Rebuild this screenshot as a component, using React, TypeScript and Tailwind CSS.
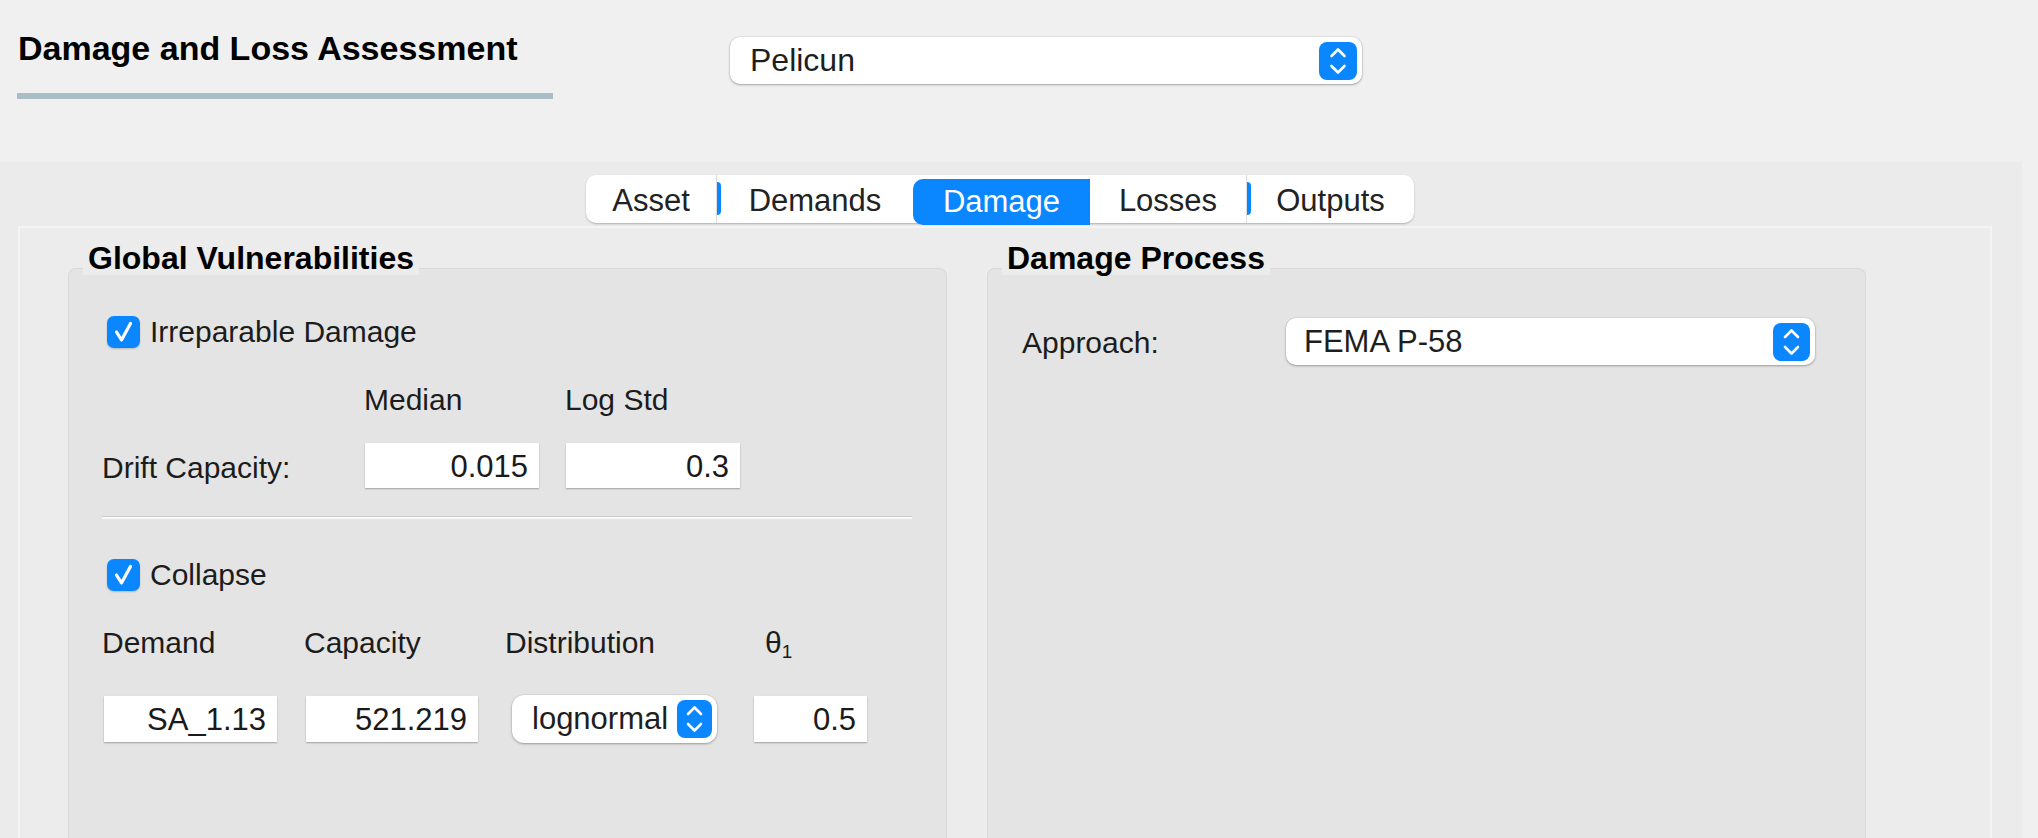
import React from "react";

const BLUE = "bg-[#0a86ff]";

function Stepper({ w, h }: { w: number; h: number }) {
  return (
    <div
      className={`flex shrink-0 items-center justify-center rounded-[8px] ${BLUE}`}
      style={{ width: w, height: h }}
    >
      <svg width={w} height={h} viewBox={`0 0 ${w} ${h}`} fill="none">
        <path
          d={`M${w / 2 - 6.5} ${h / 2 - 5} L${w / 2} ${h / 2 - 11.5} L${w / 2 + 6.5} ${h / 2 - 5}`}
          stroke="white"
          strokeWidth="2.6"
          strokeLinecap="round"
          strokeLinejoin="round"
        />
        <path
          d={`M${w / 2 - 6.5} ${h / 2 + 5} L${w / 2} ${h / 2 + 11.5} L${w / 2 + 6.5} ${h / 2 + 5}`}
          stroke="white"
          strokeWidth="2.6"
          strokeLinecap="round"
          strokeLinejoin="round"
        />
      </svg>
    </div>
  );
}

function Combo({
  text,
  className,
  textClass,
  stepW,
}: {
  text: string;
  className: string;
  textClass: string;
  stepW: number;
}) {
  return (
    <div
      className={`flex shrink-0 items-center justify-between overflow-hidden rounded-[10px] bg-white pr-[5px] shadow-[0_1px_2.5px_rgba(0,0,0,0.3),0_0_0_0.5px_rgba(0,0,0,0.08)] ${className}`}
    >
      <span className={`whitespace-nowrap text-[#1e1e1e] ${textClass}`}>{text}</span>
      <Stepper w={stepW} h={38} />
    </div>
  );
}

function Field({ value, className }: { value: string; className: string }) {
  return (
    <div
      className={`shrink-0 bg-white pr-[11px] pt-[2px] text-right text-[31px] leading-[44px] text-[#1a1a1a] shadow-[0_1px_1.5px_rgba(0,0,0,0.3)] ${className}`}
    >
      {value}
    </div>
  );
}

function Check({ label }: { label: string }) {
  return (
    <div className="ml-[5px] flex h-[32px] items-center gap-[10px]">
      <div className={`flex h-[32px] w-[33px] items-center justify-center rounded-[7px] ${BLUE} shadow-[0_1px_2px_rgba(0,0,0,0.2)]`}>
        <svg width="33" height="32" viewBox="0 0 33 32" fill="none">
          <path
            d="M9.5 16 L14.5 24 L23.5 7.5"
            stroke="white"
            strokeWidth="3.2"
            strokeLinecap="round"
            strokeLinejoin="round"
          />
        </svg>
      </div>
      <span className="text-[30px] leading-[32px]">{label}</span>
    </div>
  );
}

function Group({
  title,
  className,
  children,
}: {
  title: string;
  className: string;
  children: React.ReactNode;
}) {
  return (
    <div
      className={`relative h-[620px] w-[879px] shrink-0 rounded-t-[8px] border border-b-0 border-[#d9d9d9] bg-[#e4e4e4] ${className}`}
    >
      <div className="absolute left-[14px] top-[-29px] h-[35px] bg-[#ececec] px-[5px] text-[32px] font-bold leading-[36px] text-black">
        {title}
      </div>
      {children}
    </div>
  );
}

const tabs = [
  { label: "Asset", w: 130 },
  { label: "Demands", w: 197, divider: true },
  { label: "Damage", w: 177, active: true },
  { label: "Losses", w: 156 },
  { label: "Outputs", w: 168, divider: true },
];

export default function App() {
  return (
    <div className="h-[838px] w-[2038px] overflow-hidden bg-[#f0f0f0] font-['Liberation_Sans',Arial,sans-serif] text-[#1c1c1c]">
      <div className="flex h-[162px] pl-[17px]">
        <div className="w-[536px] pt-[28px]">
          <h1 className="pl-px text-[34px] font-bold leading-[40px] text-black">
            Damage and Loss Assessment
          </h1>
          <div className="mt-[25px] h-[6px] bg-[#a9bdc7]" />
        </div>
        <Combo
          text="Pelicun"
          stepW={38}
          className="ml-[177px] mt-[37px] h-[47px] w-[632px] pl-[20px] pr-[4px]"
          textClass="text-[32px] leading-[47px]"
        />
      </div>

      <div className="flex h-[676px]">
        <div className="flex w-[2022px] flex-col bg-[#ebebeb]">
          <div className="ml-[586px] mt-[13px] flex h-[48px] w-[828px] rounded-[10px] bg-white shadow-[0_1px_2px_rgba(0,0,0,0.25)]">
            {tabs.map((t) => (
              <div
                key={t.label}
                style={{ width: t.w }}
                className={
                  t.active
                    ? `mt-[4px] h-[46px] rounded-l-[10px] ${BLUE} text-center text-[31px] leading-[46px] text-white`
                    : `relative h-[48px] text-center text-[31px] leading-[52px] text-[#222] ${t.divider ? "border-l border-[#dcdcdc]" : ""}`
                }
              >
                {t.divider && (
                  <span className={`absolute left-0 top-[7px] h-[33px] w-[4px] rounded-r-full ${BLUE}`} />
                )}
                {t.label}
              </div>
            ))}
          </div>

          <div className="ml-[18px] mt-[3px] flex w-[1974px] flex-1 items-start border-2 border-b-0 border-[#f4f4f4] bg-[#ececec]">
            <Group title="Global Vulnerabilities" className="ml-[48px] mt-[40px]">
              <div className="pl-[33px] pt-[47px]">
                <Check label="Irreparable Damage" />
                <div className="mt-[36px] flex h-[32px] pl-[262px] text-[30px] leading-[32px]">
                  <span className="w-[201px]">Median</span>
                  <span>Log Std</span>
                </div>
                <div className="mt-[27px] flex h-[45px] items-center">
                  <span className="w-[263px] pt-[4px] text-[30px] leading-[45px]">Drift Capacity:</span>
                  <Field value="0.015" className="h-[45px] w-[174px]" />
                  <Field value="0.3" className="ml-[27px] h-[45px] w-[174px]" />
                </div>
                <div className="mt-[28px] h-px w-[810px] bg-[#cdcdcd]" />
                <div className="h-[2px] w-[810px] bg-[#f8f8f8]" />
                <div className="mt-[40px]">
                  <Check label="Collapse" />
                </div>
                <div className="mt-[36px] grid h-[32px] grid-cols-[202px_201px_249px_113px] text-[30px] leading-[32px]">
                  <span>Demand</span>
                  <span>Capacity</span>
                  <span>Distribution</span>
                  <span className="ml-[11px]">
                    θ<sub className="text-[19px]">1</sub>
                  </span>
                </div>
                <div className="mt-[36px] flex h-[48px] items-center">
                  <Field value="SA_1.13" className="ml-[2px] h-[46px] w-[173px]" />
                  <Field value="521.219" className="ml-[29px] h-[46px] w-[172px]" />
                  <Combo
                    text="lognormal"
                    stepW={35}
                    className="ml-[34px] h-[48px] w-[205px] rounded-[12px] pl-[20px]"
                    textClass="text-[31px] leading-[48px]"
                  />
                  <Field value="0.5" className="ml-[37px] h-[46px] w-[113px]" />
                </div>
              </div>
            </Group>

            <Group title="Damage Process" className="ml-[40px] mt-[40px]">
              <div className="flex items-center pl-[34px] pt-[48px]">
                <span className="w-[264px] pt-[2px] text-[30px] leading-[47px]">Approach:</span>
                <Combo
                  text="FEMA P-58"
                  stepW={37}
                  className="h-[47px] w-[529px] pl-[18px]"
                  textClass="text-[31px] leading-[47px]"
                />
              </div>
            </Group>
          </div>
        </div>
      </div>
    </div>
  );
}
